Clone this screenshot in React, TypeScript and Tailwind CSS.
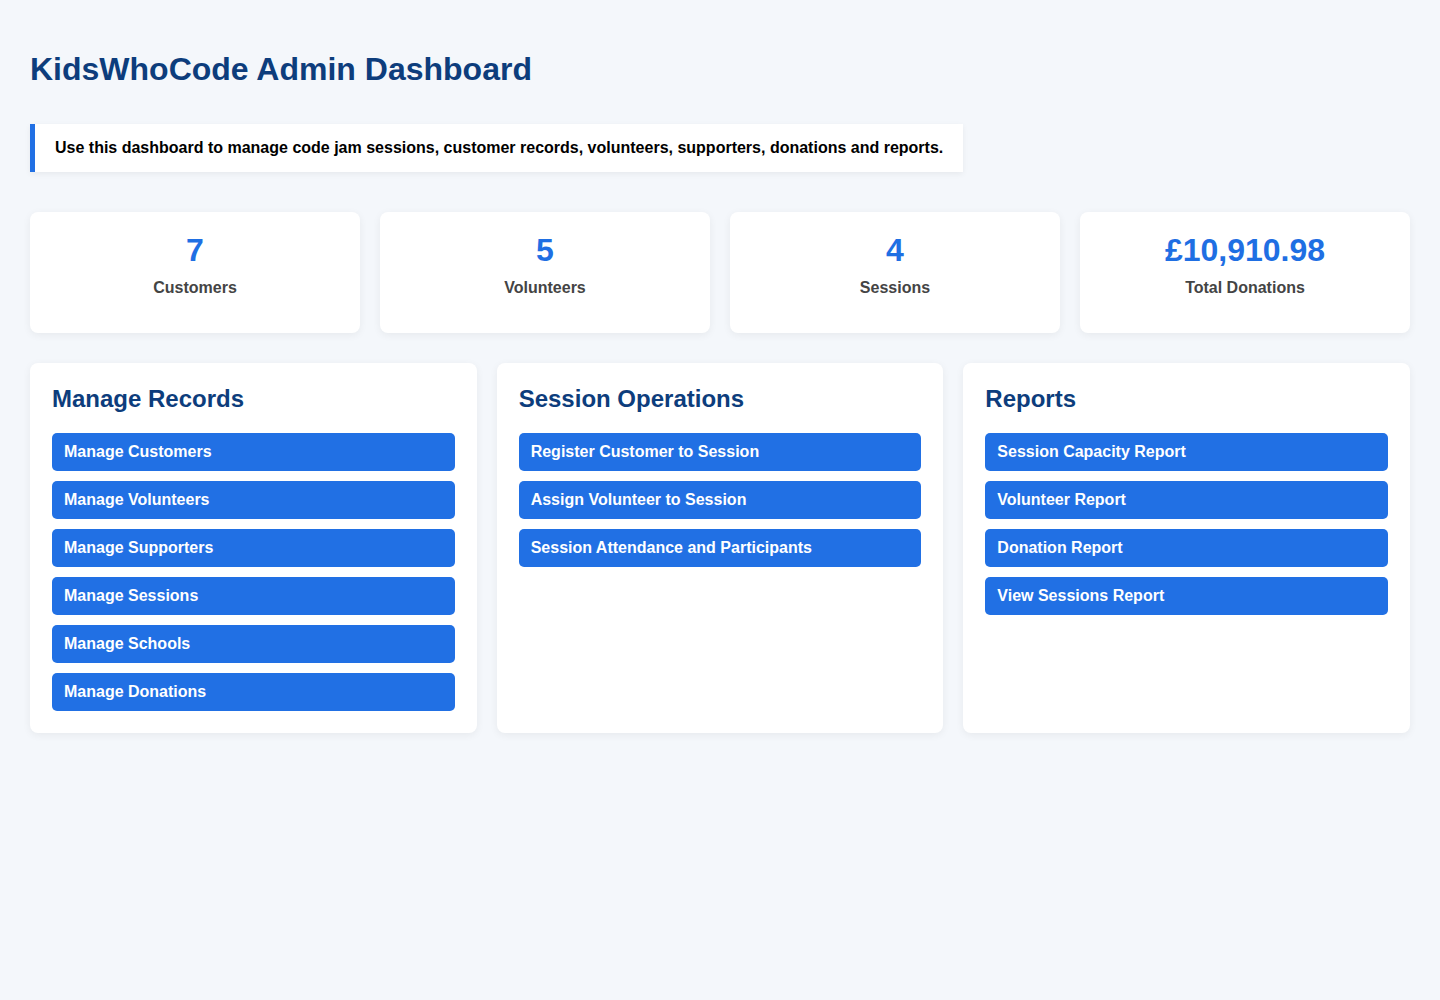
import React from 'react';

const stats = [
  { value: '7', label: 'Customers' },
  { value: '5', label: 'Volunteers' },
  { value: '4', label: 'Sessions' },
  { value: '£10,910.98', label: 'Total Donations' },
];

const panels = [
  {
    title: 'Manage Records',
    links: [
      'Manage Customers',
      'Manage Volunteers',
      'Manage Supporters',
      'Manage Sessions',
      'Manage Schools',
      'Manage Donations',
    ],
  },
  {
    title: 'Session Operations',
    links: [
      'Register Customer to Session',
      'Assign Volunteer to Session',
      'Session Attendance and Participants',
    ],
  },
  {
    title: 'Reports',
    links: [
      'Session Capacity Report',
      'Volunteer Report',
      'Donation Report',
      'View Sessions Report',
    ],
  },
];

export default function App() {
  return (
    <div className="min-h-[1000px] bg-[#f4f7fb] px-[30px] pt-[30px] font-['Liberation_Sans',Arial,sans-serif]">
      <h1 className="mt-[21px] text-[32px] leading-[37px] font-bold text-[#0d3d7c]">
        KidsWhoCode Admin Dashboard
      </h1>

      <div className="mt-[36px] w-fit border-l-[5px] border-[#2170e4] bg-white py-[15px] pr-[20px] pl-[20px] shadow-[0_2px_6px_rgba(0,0,0,0.06)]">
        <p className="text-[16px] leading-[18px] font-bold text-black">
          Use this dashboard to manage code jam sessions, customer records, volunteers, supporters, donations and reports.
        </p>
      </div>

      <div className="mt-[40px] grid grid-cols-4 gap-[20px]">
        {stats.map((s) => (
          <div
            key={s.label}
            className="flex h-[121px] flex-col items-center rounded-[8px] bg-white pt-[20px] shadow-[0_2px_8px_rgba(0,0,0,0.06)]"
          >
            <div className="text-[32px] leading-[37px] font-bold text-[#1f6fe3]">{s.value}</div>
            <div className="mt-[10px] text-[16px] leading-[18px] font-bold text-[#444]">{s.label}</div>
          </div>
        ))}
      </div>

      <div className="mt-[30px] grid grid-cols-3 gap-[20px]">
        {panels.map((p) => (
          <div
            key={p.title}
            className="h-[370px] rounded-[8px] bg-white p-[22px] shadow-[0_2px_8px_rgba(0,0,0,0.06)]"
          >
            <h2 className="text-[24px] leading-[28px] font-bold text-[#0d3d7c]">{p.title}</h2>
            <div className="mt-[20px] flex flex-col gap-[10px]">
              {p.links.map((l) => (
                <a
                  key={l}
                  href="#"
                  className="flex h-[38px] items-center rounded-[5px] bg-[#2170e4] px-[12px] text-[16px] font-bold text-white"
                >
                  {l}
                </a>
              ))}
            </div>
          </div>
        ))}
      </div>
    </div>
  );
}
